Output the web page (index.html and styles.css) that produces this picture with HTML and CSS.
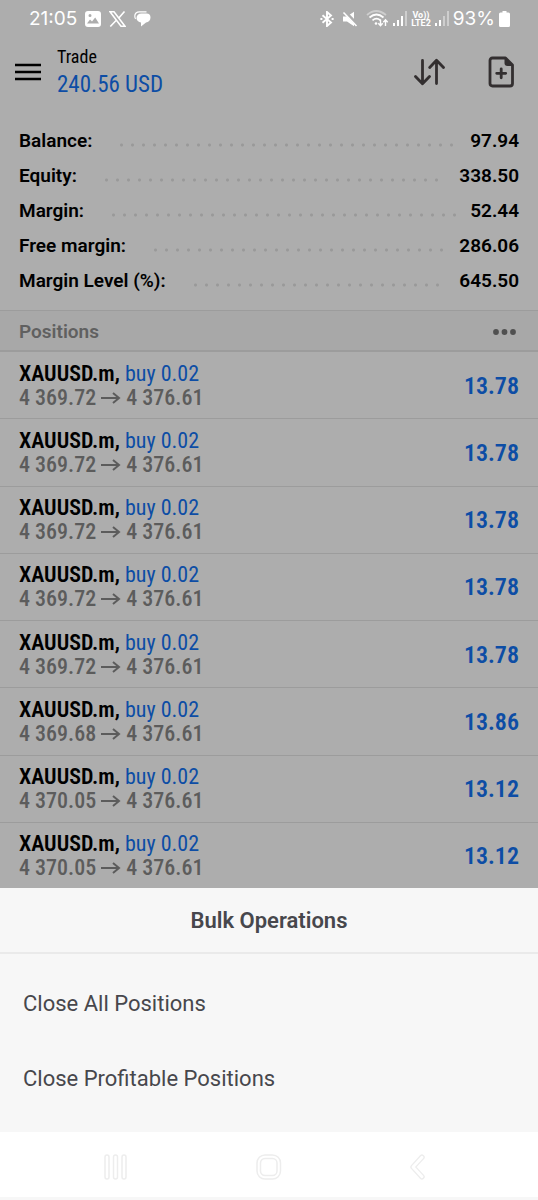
FILE: index.html
```html
<!DOCTYPE html>
<html lang="en">
<head>
<meta charset="utf-8">
<meta name="viewport" content="width=device-width, initial-scale=1">
<title>Trade</title>
<link rel="stylesheet" href="styles.css">
</head>
<body>
<div class="screen">
  <div class="status">
    <div class="status-group">
      <span class="clock">21:05</span>
      <svg width="16" height="16" viewBox="0 0 16 16" aria-hidden="true"><path fill="currentColor" fill-rule="evenodd" d="M3 0h10a3 3 0 0 1 3 3v10a3 3 0 0 1-3 3H3a3 3 0 0 1-3-3V3a3 3 0 0 1 3-3ZM2 12.5h12L10.200 6.500 7 10.500 5 8.500ZM5 3a1.500 1.500 0 1 0 0 3 1.500 1.500 0 0 0 0-3Z"/></svg>
      <svg width="17" height="16" viewBox="0 0 17 16" aria-hidden="true" fill="none" stroke="currentColor" stroke-width="1.600"><path d="M1 .8h4l11 14.400h-4ZM15.500.5 9.800 7M7.300 9.300 1.300 15.500"/></svg>
      <svg width="17" height="16" viewBox="0 0 17 16" aria-hidden="true"><path fill="currentColor" d="M7.500 2.500h5A4 4 0 0 1 16.500 6.500c0 3-2 4.600-4.500 5L7 15.500v-4C4.500 11 2.500 9.500 2.500 7S4.500 2.500 7.500 2.500Z"/><path fill="none" stroke="currentColor" stroke-width="1.200" d="M12.500.8h-7C2.500.8.8 2.700.8 5q0 1.800.8 2.800"/></svg>
    </div>
    <div class="status-group status-right">
      <svg width="14" height="16" viewBox="0 0 14 16" aria-hidden="true" fill="none" stroke="currentColor" stroke-width="1.900"><path d="m2.500 4.200 8.500 7.300-4 3.500V1l4 3.500-8.500 7.300M.4 8h2M11.600 8h2"/></svg>
      <svg class="mute" width="16" height="16" viewBox="0 0 16 16" aria-hidden="true"><path fill="currentColor" d="M1 5.500h4L12 .8v14.400l-7-4.700H1Z"/><path stroke="#adadad" stroke-width="3.500" d="M3 1 15.500 14"/><path stroke="currentColor" stroke-width="1.600" d="M1.500 1.500 14.500 15"/></svg>
      <svg width="23" height="17" viewBox="0 0 23 17" aria-hidden="true" fill="none" stroke="currentColor" stroke-width="1.700"><path opacity=".4" d="M1 5Q10-3 20 5"/><path d="M3.500 7.500Q10.500 1.500 17.500 7.500M6.500 10.300q4-3.300 8 0"/><circle cx="10" cy="13.500" r="1.300" fill="currentColor" stroke="none"/><path stroke-width="1.400" d="M14.500 9.500v6M12.300 13.300l2.200 2.400 2.200-2.400M19.500 16v-6M17.300 12.200l2.200-2.400 2.200 2.400"/></svg>
      <svg width="14" height="15" viewBox="0 0 14 15" aria-hidden="true" fill="currentColor"><path d="M0 12h2v3H0ZM4 9h2v6H4ZM8 5h2v10H8Z"/><path opacity=".4" d="M12 0h2v15h-2Z"/></svg>
      <span class="lte"><span>Vo))</span><span>LTE2</span></span>
      <svg width="14" height="15" viewBox="0 0 14 15" aria-hidden="true" fill="currentColor"><path d="M0 12h2v3H0ZM4 9h2v6H4Z"/><path opacity=".4" d="M8 5h2v10H8ZM12 0h2v15h-2Z"/></svg>
      <span class="charge">93%</span>
      <svg width="11" height="16" viewBox="0 0 11 16" aria-hidden="true"><path fill="currentColor" d="M3.500 0h4v1.500h2A1.500 1.500 0 0 1 11 3v11.500A1.500 1.500 0 0 1 9.500 16h-8A1.500 1.500 0 0 1 0 14.500V3a1.500 1.500 0 0 1 1.500-1.500h2Z"/></svg>
    </div>
  </div>

  <header class="bar">
    <button class="icon-button" type="button" aria-label="Menu"><svg width="26" height="18" viewBox="0 0 26 18"><path stroke="#000" stroke-width="2.600" d="M0 2h26M0 9h26M0 16h26"/></svg></button>
    <div class="heading"><h1 class="title">Trade</h1><div class="total">240.56 USD</div></div>
    <button class="icon-button sort" type="button" aria-label="Sort"><svg width="32" height="28" viewBox="0 0 32 28" fill="none" stroke="#332f30" stroke-width="2.800" stroke-linecap="round" stroke-linejoin="round"><path d="M9.500 2.500v23M2.500 18.500l7 7.300 7-7.300M23.500 25.500v-23M16.700 9.500l6.800-7.300 7 7.300"/></svg></button>
    <button class="icon-button" type="button" aria-label="New order"><svg width="26" height="32" viewBox="0 0 26 32" fill="none" stroke="#332f30" stroke-width="2.800"><path stroke-linejoin="round" d="M4.500 2h13L24.500 9v18.500q0 2.500-2.500 2.500H4.500Q2 30 2 27.500v-23Q2 2 4.500 2Z"/><path fill="#332f30" stroke="none" d="M16.500 1.500v5.500q0 3 3 3h5.500Z"/><path stroke-linecap="round" d="M13.200 12.800v9M8.700 17.300h9"/></svg></button>
  </header>

  <dl class="summary">
    <div class="sum-row"><dt>Balance:</dt><dd>97.94</dd></div>
    <div class="sum-row"><dt>Equity:</dt><dd>338.50</dd></div>
    <div class="sum-row"><dt>Margin:</dt><dd>52.44</dd></div>
    <div class="sum-row"><dt>Free margin:</dt><dd>286.06</dd></div>
    <div class="sum-row"><dt>Margin Level (%):</dt><dd>645.50</dd></div>
  </dl>

  <div class="section">
    <h2 class="section-title">Positions</h2>
    <button class="icon-button" type="button" aria-label="Bulk operations"><svg width="24" height="6" viewBox="0 0 24 6" fill="#505050"><circle cx="3" cy="3" r="2.900"/><circle cx="11.500" cy="3" r="2.900"/><circle cx="20" cy="3" r="2.900"/></svg></button>
  </div>

  <ul class="positions">
    <li class="position"><div><div class="deal">XAUUSD.m, <span class="side">buy 0.02</span></div><div class="prices">4 369.72 <svg class="arrow" viewBox="0 0 20 12"><path d="M0 6h18M12 1l6 5-6 5"/></svg> 4 376.61</div></div><span class="profit">13.78</span></li>
    <li class="position"><div><div class="deal">XAUUSD.m, <span class="side">buy 0.02</span></div><div class="prices">4 369.72 <svg class="arrow" viewBox="0 0 20 12"><path d="M0 6h18M12 1l6 5-6 5"/></svg> 4 376.61</div></div><span class="profit">13.78</span></li>
    <li class="position"><div><div class="deal">XAUUSD.m, <span class="side">buy 0.02</span></div><div class="prices">4 369.72 <svg class="arrow" viewBox="0 0 20 12"><path d="M0 6h18M12 1l6 5-6 5"/></svg> 4 376.61</div></div><span class="profit">13.78</span></li>
    <li class="position"><div><div class="deal">XAUUSD.m, <span class="side">buy 0.02</span></div><div class="prices">4 369.72 <svg class="arrow" viewBox="0 0 20 12"><path d="M0 6h18M12 1l6 5-6 5"/></svg> 4 376.61</div></div><span class="profit">13.78</span></li>
    <li class="position"><div><div class="deal">XAUUSD.m, <span class="side">buy 0.02</span></div><div class="prices">4 369.72 <svg class="arrow" viewBox="0 0 20 12"><path d="M0 6h18M12 1l6 5-6 5"/></svg> 4 376.61</div></div><span class="profit">13.78</span></li>
    <li class="position"><div><div class="deal">XAUUSD.m, <span class="side">buy 0.02</span></div><div class="prices">4 369.68 <svg class="arrow" viewBox="0 0 20 12"><path d="M0 6h18M12 1l6 5-6 5"/></svg> 4 376.61</div></div><span class="profit">13.86</span></li>
    <li class="position"><div><div class="deal">XAUUSD.m, <span class="side">buy 0.02</span></div><div class="prices">4 370.05 <svg class="arrow" viewBox="0 0 20 12"><path d="M0 6h18M12 1l6 5-6 5"/></svg> 4 376.61</div></div><span class="profit">13.12</span></li>
    <li class="position"><div><div class="deal">XAUUSD.m, <span class="side">buy 0.02</span></div><div class="prices">4 370.05 <svg class="arrow" viewBox="0 0 20 12"><path d="M0 6h18M12 1l6 5-6 5"/></svg> 4 376.61</div></div><span class="profit">13.12</span></li>
  </ul>

  <section class="sheet" role="dialog" aria-labelledby="sheet-title">
    <h2 class="sheet-title" id="sheet-title">Bulk Operations</h2>
    <div class="actions">
      <button class="action" type="button">Close All Positions</button>
      <button class="action" type="button">Close Profitable Positions</button>
    </div>
  </section>

  <nav class="system-nav">
    <button class="icon-button" type="button" aria-label="Recent apps"><svg width="24" height="26" viewBox="0 0 24 26" fill="none" stroke="#ededed" stroke-width="1.500"><rect x="1" y="1" width="4" height="24" rx="2"/><rect x="9.500" y="1" width="4" height="24" rx="2"/><rect x="18" y="1" width="4" height="24" rx="2"/></svg></button>
    <button class="icon-button" type="button" aria-label="Home"><svg width="26" height="26" viewBox="0 0 26 26" fill="none" stroke="#ededed" stroke-width="1.500"><rect x="1" y="1" width="23.500" height="24" rx="8"/><rect x="4.500" y="4.500" width="16.500" height="17" rx="4.500"/></svg></button>
    <button class="icon-button" type="button" aria-label="Back"><svg width="17" height="26" viewBox="0 0 17 26" fill="none" stroke-linecap="round" stroke-linejoin="round"><path stroke="#ededed" stroke-width="5.500" d="M13 3.200 4 13l9 9.800"/><path stroke="#fff" stroke-width="2.800" d="M13 3.200 4 13l9 9.800"/></svg></button>
  </nav>
</div>
</body>
</html>
```
FILE: styles.css
```css
* { box-sizing: border-box; }
body { margin: 0; font-family: Roboto, "Liberation Sans", sans-serif; background: #fff; }
h1, h2, dl, dd, ul { margin: 0; padding: 0; }
ul { list-style: none; }
svg { display: block; flex: none; }
button { font: inherit; color: inherit; border: 0; background: none; padding: 0; cursor: pointer; }

.screen { min-height: 100vh; display: flex; flex-direction: column; background: #adadad; }

.status { display: flex; justify-content: space-between; align-items: center; height: 37px; padding: 0 28px 0 29px; color: #fff; }
.status-group { display: flex; align-items: center; gap: 8px; }
.status-right { gap: 4px; }
.mute { margin: 0 4px; }
.clock, .charge { font-family: Inter, Roboto, sans-serif; font-size: 19px; }
.lte { display: flex; flex-direction: column; align-items: center; font-size: 9px; line-height: 8px; font-weight: 700; }

.bar { display: flex; align-items: center; height: 70px; padding: 0 24px 0 15px; }
.icon-button { display: block; }
.heading { flex: 1; margin-left: 16px; padding-top: 2px; font-family: "Roboto Condensed", "Liberation Sans Narrow", Roboto, sans-serif; }
.title { font-size: 18px; line-height: 24px; font-weight: 400; }
.total { font-size: 23px; line-height: 32px; color: #0d4da5; }
.sort { margin-right: 43px; }

.summary { padding: 16px 19px 12px; }
.sum-row { display: flex; align-items: center; height: 35px; font-size: 19px; font-weight: 600; color: #000; }
.sum-row::before { content: ""; order: 1; flex: 1; height: 4px; margin: 8px 14px 0 24px; background: radial-gradient(circle, #999 1px, transparent 2px) 0 0 / 11px 4px repeat-x; }
.sum-row dt { order: 0; }
.sum-row dd { order: 2; }

.section { display: flex; justify-content: space-between; align-items: center; height: 42px; padding: 2px 21px 0 19px; border-top: 1px solid #9c9c9c; border-bottom: 2px solid #9c9c9c; background: #a8a8a8; color: #606060; }
.section-title { font-size: 19px; font-weight: 600; }

.positions { flex: 1; display: flex; flex-direction: column; }
.position { flex: 1 0 66px; display: flex; justify-content: space-between; align-items: center; padding: 1px 19px 0; border-bottom: 1px solid #9c9c9c; font-family: "Roboto Condensed", "Liberation Sans Narrow", Roboto, sans-serif; }
.deal, .prices { font-size: 22px; line-height: 24px; font-weight: 500; white-space: nowrap; }
.deal { color: #000; font-weight: 600; }
.side { font-weight: 400; color: #0d4da5; }
.prices { color: #5c5c5c; }
.arrow { display: inline-block; width: 20px; height: 12px; vertical-align: 1px; fill: none; stroke: #5c5c5c; stroke-width: 2; }
.profit { font-size: 24px; font-weight: 600; color: #0d4da5; }

.sheet { position: relative; margin-top: -2px; background: #f7f7f7; color: #47474c; }
.sheet-title { padding: 17px 17px 15px; border-bottom: 2px solid #eaeaea; font-size: 22px; line-height: 32px; font-weight: 600; text-align: center; }
.actions { display: flex; flex-direction: column; padding: 12px 0 16px; }
.action { padding: 0 23px; font-size: 22px; line-height: 75px; text-align: left; }

.system-nav { display: flex; justify-content: space-between; align-items: center; height: 68px; padding: 5px 112px 0 104px; border-bottom: 3px solid #f7f7f7; background: #fff; }
```
